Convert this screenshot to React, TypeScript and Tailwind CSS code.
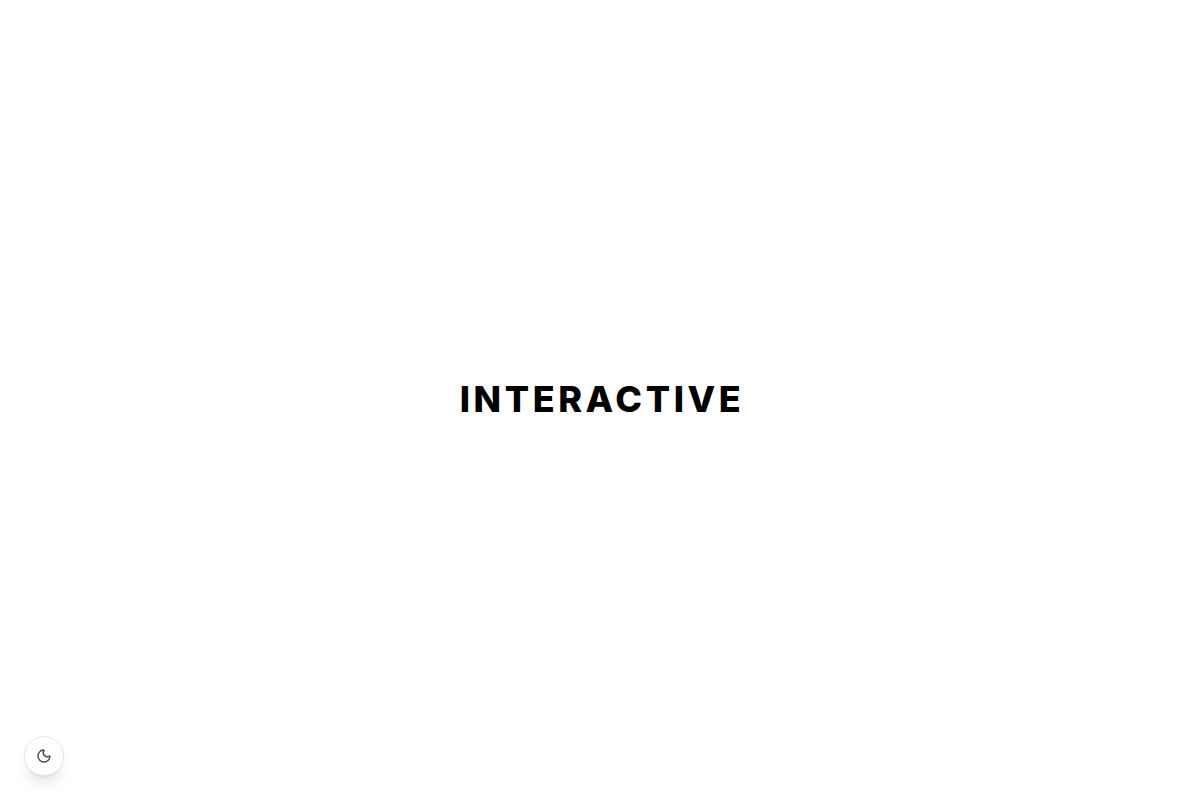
import { Moon } from "lucide-react";

export default function App() {
  return (
    <main className="flex min-h-screen items-center justify-center bg-white pb-0.5 pl-1 text-black">
      <h1 className="font-['Inter',sans-serif] text-4xl font-extrabold tracking-widest">
        INTERACTIVE
      </h1>
      <button
        type="button"
        aria-label="Switch to dark mode"
        className="fixed bottom-6 left-6 flex size-10 items-center justify-center rounded-full border border-neutral-200 bg-white text-neutral-700 shadow-lg"
      >
        <Moon className="size-4" />
      </button>
    </main>
  );
}
